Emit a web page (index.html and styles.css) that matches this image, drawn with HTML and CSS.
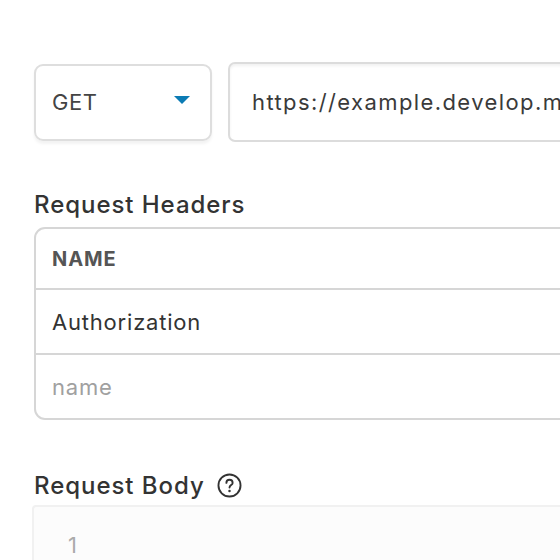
FILE: index.html
```html
<!DOCTYPE html>
<html>
<head>
  <meta charset="utf-8">
  <title>Request</title>
  <link rel="stylesheet" href="styles.css">
</head>
<body>
  <div class="page">
    <div class="request-line">
      <div class="method">
        <span>GET</span>
        <span class="caret"></span>
      </div>
      <div class="url">https://example.develop.m</div>
    </div>

    <h3 class="section-title">Request Headers</h3>
    <div class="headers">
      <div class="row head">NAME</div>
      <div class="row">Authorization</div>
      <div class="row placeholder">name</div>
    </div>

    <h3 class="section-title body-title">
      Request Body
      <svg class="help" width="25" height="25" viewBox="0 0 24 24">
        <circle cx="12" cy="12" r="10.6" fill="none" stroke="#333" stroke-width="1.8"/>
        <path d="M9 9.5a3 3 0 0 1 6 0c0 2-3 2.2-3 4.4" fill="none" stroke="#333" stroke-width="1.8" stroke-linecap="round"/>
        <circle cx="12" cy="17.2" r="1.2" fill="#333"/>
      </svg>
    </h3>
    <div class="body-editor">
      <span class="line-no">1</span>
    </div>
  </div>
</body>
</html>
```

FILE: styles.css
```css
* {
  margin: 0;
  padding: 0;
  box-sizing: border-box;
}
html, body {
  overflow: hidden;
}
body {
  background: #fff;
  color: #333;
  font-family: Inter, "Noto Sans", sans-serif;
}
.page {
  width: 760px;
  padding: 62px 0 0 34px;
}
.request-line {
  display: flex;
  gap: 16px;
  align-items: center;
}
.method {
  width: 178px;
  height: 77px;
  border: 2px solid #dedede;
  border-radius: 9px;
  box-shadow: 0 3px 3px rgba(0, 0, 0, 0.05);
  display: flex;
  align-items: center;
  justify-content: space-between;
  padding: 0 20px 0 16px;
  font-size: 22px;
  letter-spacing: 0.6px;
  color: #444;
}
.caret {
  width: 0;
  height: 0;
  border-left: 8px solid transparent;
  border-right: 8px solid transparent;
  border-top: 8px solid #0b7bb4;
  margin-top: -4px;
}
.url {
  flex: 1;
  height: 80px;
  border: 2px solid #dcdcdc;
  border-radius: 7px;
  box-shadow: inset 0 2px 3px rgba(0, 0, 0, 0.06);
  display: flex;
  align-items: center;
  padding-left: 22px;
  font-size: 22px;
  letter-spacing: 1.4px;
  color: #3a3a3a;
  white-space: nowrap;
  overflow: hidden;
}
.section-title {
  font-size: 24px;
  font-weight: 500;
  letter-spacing: 0.95px;
  color: #333;
  display: flex;
  align-items: center;
  gap: 12px;
  margin: 48px 0 9px;
  height: 28px;
}
.headers {
  border: 2px solid #d6d6d6;
  border-radius: 11px;
}
.row {
  height: 65px;
  display: flex;
  align-items: center;
  padding-left: 16px;
  font-size: 22px;
  letter-spacing: 0.8px;
  color: #333;
  border-top: 2px solid #d6d6d6;
}
.row.head {
  height: 59px;
  border-top: 0;
  font-size: 20px;
  font-weight: 700;
  color: #555;
  letter-spacing: 0.9px;
}
.row.placeholder {
  color: #a0a0a0;
  border-bottom-left-radius: 9px;
}
.section-title.body-title {
  margin: 51px 0 6px;
}
.help {
  display: block;
}
.body-editor {
  margin-left: -2px;
  height: 120px;
  background: #fcfcfc;
  border-top: 2px solid #f1f1f1;
  border-left: 2px solid #f1f1f1;
  border-top-left-radius: 4px;
  padding: 25px 0 0 34px;
  font-size: 22px;
  color: #ababab;
}
```
